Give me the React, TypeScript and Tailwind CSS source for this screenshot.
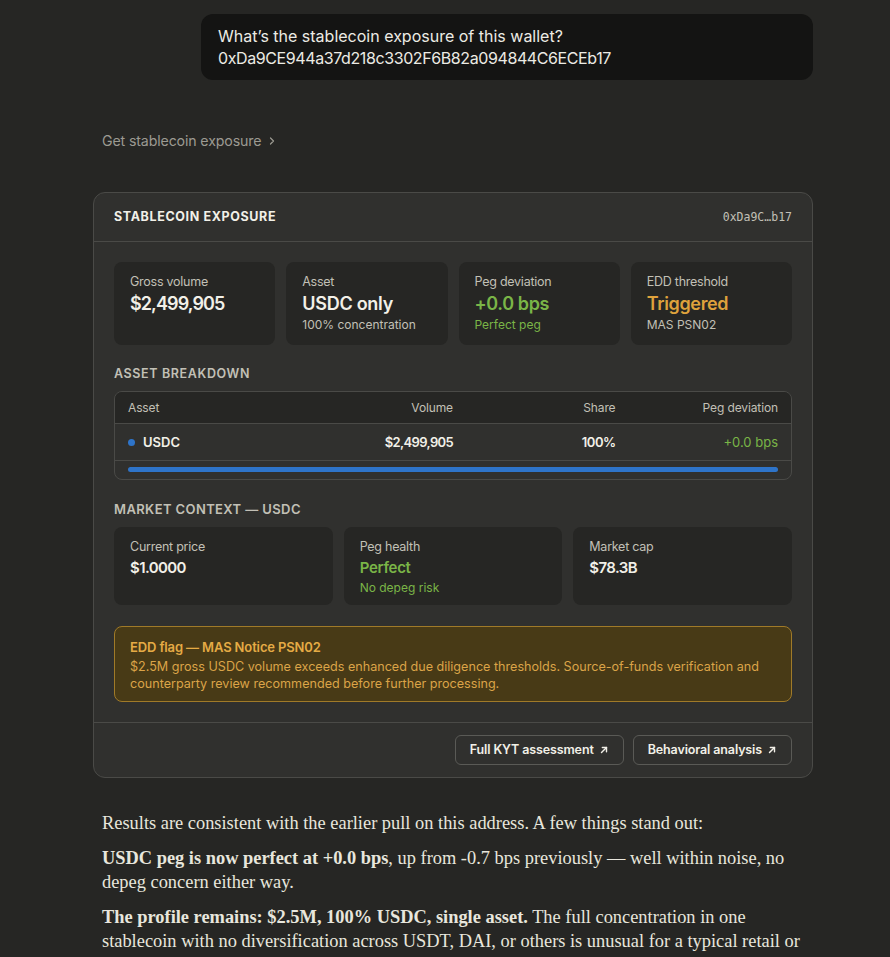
import React from "react";

const SANS = "font-['Inter',sans-serif]";

const ArrowUpRight: React.FC = () => (
    <svg width="10" height="10" viewBox="0 0 12 12" fill="none" stroke="currentColor" strokeWidth="1.7" strokeLinecap="round" strokeLinejoin="round">
        <path d="M3 9L9 3" />
        <path d="M4 3h5v5" />
    </svg>
)

type CardProps = { label: string; value: string; sub?: string; valueClass?: string; subClass?: string }

const StatCard = ({ label, value, sub, valueClass = "text-[#f2f0e8] tracking-[-0.015em]", subClass = "text-[#c2c0b6]" }: CardProps) => (
    <div className="bg-[#262624] rounded-lg px-4 pt-[11px] h-[83px]">
        <div className="text-[12.5px] tracking-[-0.02em] text-[#c2c0b6] leading-[18px]">{label}</div>
        <div className={`text-[18px] font-semibold leading-[26px] ${valueClass}`}>{value}</div>
        {sub && <div className={`text-[12px] leading-[16px] ${subClass}`}>{sub}</div>}
    </div>
)

const MarketCard = ({ label, value, sub, valueClass = "text-[#f2f0e8] tracking-[-0.04em]" }: CardProps) => (
    <div className="bg-[#262624] rounded-lg px-4 pt-[11px] h-[78px]">
        <div className="text-[12.5px] tracking-[-0.02em] text-[#c2c0b6] leading-[18px]">{label}</div>
        <div className={`text-[15px] font-semibold leading-[24px] ${valueClass}`}>{value}</div>
        {sub && <div className="text-[12px] leading-[16px] text-[#7ab547]">{sub}</div>}
    </div>
)

const App: React.FC = () => {
    return (
        <div className={`min-h-[957px] bg-[#262624] ${SANS} overflow-hidden`}>
            <div className="ml-[93px] w-[720px] pt-[14px]">
                {/* user message */}
                <div className="flex justify-end">
                    <div className="w-[612px] bg-[#141413] rounded-xl px-[17px] py-[11px] text-[16px] leading-[22px] text-[#ecebe4]">
                        <div>What’s the stablecoin exposure of this wallet?</div>
                        <div className="tracking-[-0.025em]">0xDa9CE944a37d218c3302F6B82a094844C6ECEb17</div>
                    </div>
                </div>

                <div className="mt-[50px] pl-[9px] flex items-center gap-[7px] text-[14.2px] tracking-[-0.01em] text-[#9c9a92]">
                    <span>Get stablecoin exposure</span>
                    <svg width="8" height="10" viewBox="0 0 8 10" fill="none" stroke="currentColor" strokeWidth="1.2" strokeLinecap="round" strokeLinejoin="round">
                        <path d="M2.5 2l3 3-3 3" />
                    </svg>
                </div>

                {/* card */}
                <div className="mt-[41px] bg-[#30302e] border border-[#4a4a47] rounded-xl">
                    <div className="flex items-center justify-between px-5 h-[49px] border-b border-[#4a4a47]">
                        <span className="text-[12.5px] font-bold tracking-[0.05em] text-[#f2f0e8]">STABLECOIN EXPOSURE</span>
                        <span className="font-['DejaVu_Sans_Mono',monospace] text-[11.5px] text-[#c2c0b6]">0xDa9C…b17</span>
                    </div>

                    <div className="px-5 pt-5 pb-5">
                        <div className="grid grid-cols-4 gap-[11px]">
                            <StatCard label="Gross volume" value="$2,499,905" valueClass="text-[#f2f0e8] tracking-[-0.05em]" />
                            <StatCard label="Asset" value="USDC only" sub="100% concentration" />
                            <StatCard label="Peg deviation" value="+0.0 bps" sub="Perfect peg" valueClass="text-[#7ab547] tracking-[-0.02em]" subClass="text-[#7ab547]" />
                            <StatCard label="EDD threshold" value="Triggered" sub="MAS PSN02" valueClass="text-[#dfa23c] tracking-[-0.02em]" />
                        </div>

                        <div className="mt-[20px] text-[12.5px] font-semibold tracking-[0.05em] text-[#c2c0b6] leading-[18px]">ASSET BREAKDOWN</div>
                        <div className="mt-[8px] border border-[#4a4a47] rounded-lg overflow-hidden">
                            <div className="grid grid-cols-4 px-[13px] h-[32px] items-center bg-[#262624] text-[12px] tracking-[-0.01em] text-[#c2c0b6] border-b border-[#4a4a47]">
                                <span>Asset</span>
                                <span className="text-right">Volume</span>
                                <span className="text-right">Share</span>
                                <span className="text-right">Peg deviation</span>
                            </div>
                            <div className="grid grid-cols-4 px-[13px] h-[37px] items-center text-[13px] border-b border-[#4a4a47]">
                                <span className="flex items-center gap-2 font-semibold text-[#f2f0e8]">
                                    <span className="w-[7px] h-[7px] rounded-full bg-[#2e74c9]" />
                                    USDC
                                </span>
                                <span className="text-right font-semibold tracking-[-0.05em] text-[#f2f0e8]">$2,499,905</span>
                                <span className="text-right font-semibold tracking-[-0.04em] text-[#f2f0e8]">100%</span>
                                <span className="text-right text-[#7ab547]">+0.0 bps</span>
                            </div>
                            <div className="px-[13px] pt-[6px] pb-[7px]">
                                <div className="h-[5px] rounded-full bg-[#2e74c9]" />
                            </div>
                        </div>

                        <div className="mt-[20px] text-[13px] font-semibold tracking-[0.03em] text-[#c2c0b6] leading-[18px]">MARKET CONTEXT — USDC</div>
                        <div className="mt-[9px] grid grid-cols-3 gap-[11px]">
                            <MarketCard label="Current price" value="$1.0000" />
                            <MarketCard label="Peg health" value="Perfect" sub="No depeg risk" valueClass="text-[#7ab547] tracking-[-0.02em]" />
                            <MarketCard label="Market cap" value="$78.3B" />
                        </div>

                        <div className="mt-[21px] bg-[#483a16] border border-[#a07a28] rounded-lg px-[15px] pt-[10px] pb-[9px]">
                            <div className="text-[13px] font-semibold tracking-[-0.01em] text-[#e5ab45] leading-[20px]">EDD flag — MAS Notice PSN02</div>
                            <div className="mt-[1px] text-[12.6px] text-[#dba448] leading-[17px]">
                                $2.5M gross USDC volume exceeds enhanced due diligence thresholds. Source-of-funds verification and counterparty review recommended before further processing.
                            </div>
                        </div>
                    </div>

                    <div className="border-t border-[#4a4a47] px-5 pt-[12px] pb-[12px] flex justify-end gap-[9px]">
                        <button className="h-[30px] px-[14px] flex items-center gap-[5px] border border-[#5a5a56] rounded-md text-[12.5px] font-semibold tracking-[-0.01em] text-[#f2f0e8]">
                            Full KYT assessment <ArrowUpRight />
                        </button>
                        <button className="h-[30px] px-[14px] flex items-center gap-[5px] border border-[#5a5a56] rounded-md text-[12.5px] font-semibold tracking-[-0.01em] text-[#f2f0e8]">
                            Behavioral analysis <ArrowUpRight />
                        </button>
                    </div>
                </div>

                {/* response text */}
                <div className="mt-[33px] pl-[9px] pr-[10px] font-['Liberation_Serif',serif] text-[18.4px] leading-[24px] text-[#e8e6dd] space-y-[11px]">
                    <p>Results are consistent with the earlier pull on this address. A few things stand out:</p>
                    <p><strong className="font-semibold">USDC peg is now perfect at +0.0 bps</strong>, up from -0.7 bps previously — well within noise, no depeg concern either way.</p>
                    <p><strong className="font-semibold">The profile remains: $2.5M, 100% USDC, single asset.</strong> The full concentration in one stablecoin with no diversification across USDT, DAI, or others is unusual for a typical retail or institutional wallet.</p>
                </div>
            </div>
        </div>
    )
}

export default App
